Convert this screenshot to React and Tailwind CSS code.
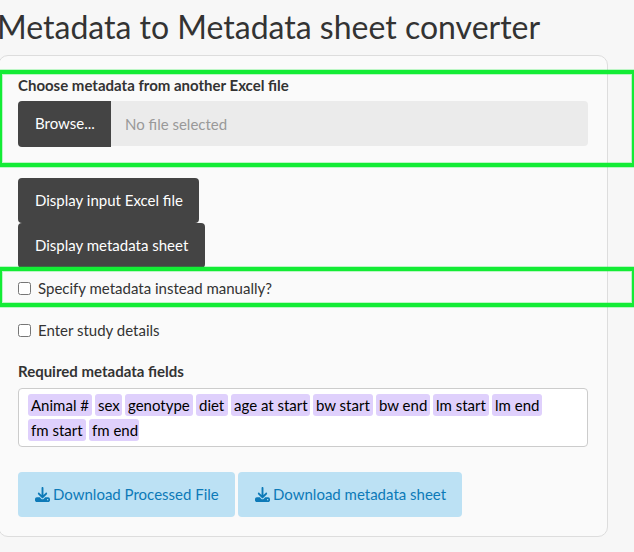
import { FaDownload } from "react-icons/fa6";

const FIELD_ROWS = [
  [
    ["Animal #", "w-[64px]"],
    ["sex", "w-[27px]"],
    ["genotype", "w-[68px]"],
    ["diet", "w-[32px]"],
    ["age at start", "w-[79px]"],
    ["bw start", "w-[60px]"],
    ["bw end", "w-[54px]"],
    ["lm start", "w-[56px]"],
    ["lm end", "w-[50px]"],
  ],
  [
    ["fm start", "w-[58px]"],
    ["fm end", "w-[50px]"],
  ],
];

function DarkButton({ width, children }) {
  return (
    <button className={`h-[45px] rounded-[4px] bg-[#444444] pl-[17px] text-left whitespace-nowrap text-white ${width}`}>
      {children}
    </button>
  );
}

function DownloadButton({ width, children }) {
  return (
    <button
      className={`flex h-[45px] items-center gap-[3px] rounded-[4px] bg-[#bce1f4] pl-[17px] whitespace-nowrap text-[#0d7ab8] ${width}`}
    >
      <FaDownload className="size-[15px] shrink-0" />
      <span>{children}</span>
    </button>
  );
}

function CheckRow({ children }) {
  return (
    <label className="flex h-[22px] items-center gap-[7px]">
      <input
        type="checkbox"
        className="mt-px size-[13px] shrink-0 appearance-none rounded-[2.5px] border border-[#767676] bg-white"
      />
      <span>{children}</span>
    </label>
  );
}

export default function App() {
  return (
    <main className="relative h-[552px] w-[634px] overflow-hidden bg-[#f7f7f7] font-['Lato',sans-serif] text-[15px] leading-[21px] text-[#333333]">
      <h1 className="-ml-[3px] h-[55px] pt-[9px] text-[32px] leading-[35px] whitespace-nowrap">
        Metadata to Metadata sheet converter
      </h1>
      <section className="-ml-[2px] h-[482px] w-[610px] rounded-[10px] border border-[#dddddd] bg-[#fafafa] px-[19px] pt-[19px]">
        <div className="font-bold">Choose metadata from another Excel file</div>
        <div className="mt-[5px] flex h-[46px] items-start">
          <button className="h-[46px] w-[93px] rounded-l-[4px] bg-[#444444] pb-[2px] pl-[17px] text-left text-white">
            Browse...
          </button>
          <div className="flex h-[45px] flex-1 items-center rounded-r-[4px] bg-[#ebebeb] pt-[2px] pl-[14px] text-[#999999]">
            No file selected
          </div>
        </div>
        <div className="mt-[31px] flex flex-col items-start">
          <DarkButton width="w-[181px]">Display input Excel file</DarkButton>
          <DarkButton width="w-[187px]">Display metadata sheet</DarkButton>
        </div>
        <div className="mt-[9px] flex flex-col gap-[20px]">
          <CheckRow>Specify metadata instead manually?</CheckRow>
          <CheckRow>Enter study details</CheckRow>
        </div>
        <div className="mt-[20px] font-bold">Required metadata fields</div>
        <div className="mt-[6px] flex h-[59px] flex-col gap-[3px] rounded-[4px] border border-[#cccccc] bg-white pt-[5px] pl-[9px] text-black">
          {FIELD_ROWS.map((row, i) => (
            <div key={i} className="flex gap-[3px]">
              {row.map(([field, width]) => (
                <span
                  key={field}
                  className={`h-[22px] rounded-[3px] bg-[#dfd0fc] pl-[3px] leading-[23px] whitespace-nowrap ${width}`}
                >
                  {field}
                </span>
              ))}
            </div>
          ))}
        </div>
        <div className="mt-[25px] flex gap-[3px]">
          <DownloadButton width="w-[217px]">Download Processed File</DownloadButton>
          <DownloadButton width="w-[224px]">Download metadata sheet</DownloadButton>
        </div>
      </section>
      <div className="pointer-events-none absolute top-[70px] -left-[2px] h-[97px] w-[638px] border-4 border-[#13ec35] shadow-[0_0_0_1px_#13ec3544,inset_0_0_0_1px_#13ec3544]" />
      <div className="pointer-events-none absolute top-[267px] -left-[2px] h-[40px] w-[638px] border-4 border-[#13ec35] shadow-[0_0_0_1px_#13ec3544,inset_0_0_0_1px_#13ec3544]" />
    </main>
  );
}
